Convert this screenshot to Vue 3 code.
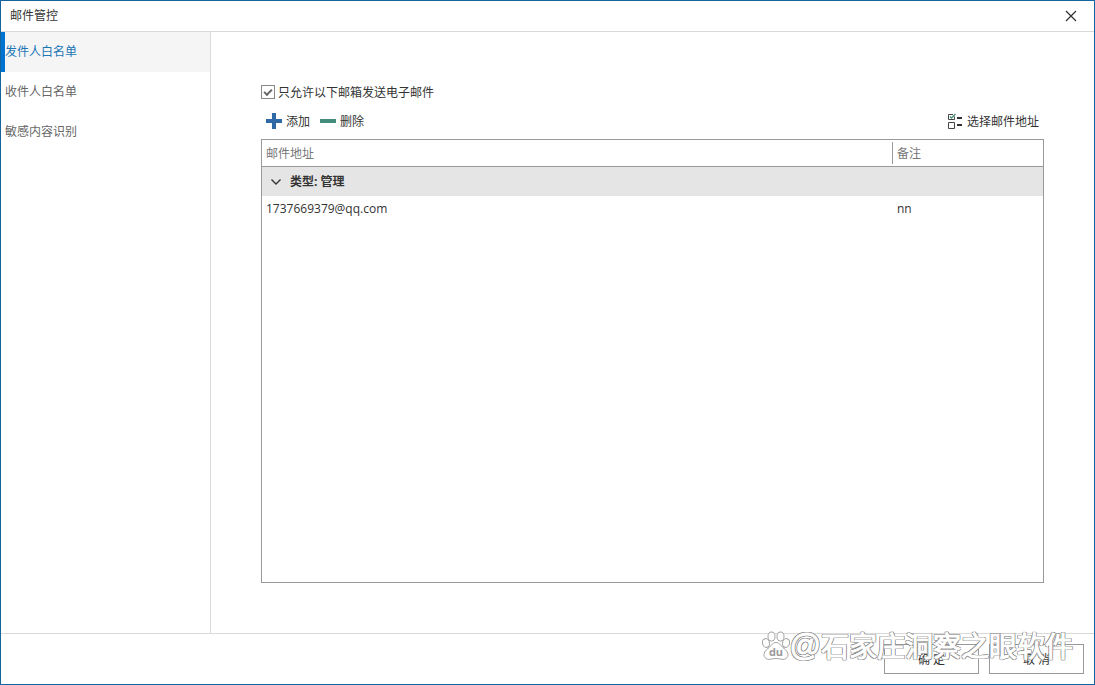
<script setup>
import { ref } from 'vue'

const sections = ['发件人白名单', '收件人白名单', '敏感内容识别']
const active = ref(0)
const onlyListed = ref(true)
const expanded = ref(true)
const rows = [{ address: '1737669379@qq.com', note: 'nn' }]
</script>

<template>
  <div class="window">
    <header class="titlebar">
      <h1>邮件管控</h1>
      <button class="close" type="button" aria-label="关闭">
        <svg width="12" height="12" viewBox="0 0 12 12"><path d="M1 1L11 11M11 1L1 11" fill="none" stroke="#333" stroke-width="1.3" /></svg>
      </button>
    </header>

    <div class="body">
      <nav class="sidebar">
        <button
          v-for="(name, i) in sections"
          :key="name"
          type="button"
          :class="['section', { active: i === active }]"
          @click="active = i"
        >{{ name }}</button>
      </nav>

      <main class="content">
        <label class="check">
          <input v-model="onlyListed" type="checkbox" />
          <span>只允许以下邮箱发送电子邮件</span>
        </label>

        <div class="toolbar">
          <button type="button" class="tool">
            <svg width="16" height="16" viewBox="0 0 16 16"><path d="M6 0h4v6h6v4h-6v6H6v-6H0V6h6z" fill="#2f6aa6" /></svg>
            <span>添加</span>
          </button>
          <button type="button" class="tool">
            <svg width="16" height="16" viewBox="0 0 16 16"><path d="M0 6h16v4H0z" fill="#438c7b" /></svg>
            <span>删除</span>
          </button>
          <button type="button" class="tool pick">
            <svg width="16" height="16" viewBox="0 0 16 16">
              <path d="M7.500 3.500V6.500H1.500V1.500H6M1.500 9.500H7.500V15.500H1.500Z" fill="none" stroke="#444" />
              <path d="M3 3.500L4.500 5L8.500 1" fill="none" stroke="#438c7b" stroke-width="1.3" />
              <path d="M10 4h5v2h-5zM10 11h5v2h-5z" fill="#333" />
            </svg>
            <span>选择邮件地址</span>
          </button>
        </div>

        <div class="grid">
          <table>
            <colgroup><col /><col class="note-col" /></colgroup>
            <thead>
              <tr><th scope="col">邮件地址</th><th scope="col" class="note">备注</th></tr>
            </thead>
            <tbody>
              <tr class="group">
                <td colspan="2">
                  <button type="button" :aria-expanded="expanded" @click="expanded = !expanded">
                    <svg width="12" height="8" viewBox="0 0 12 8"><path d="M1.500 1.500L6 6L10.500 1.500" fill="none" stroke="#333" stroke-width="1.4" /></svg>
                    <span>类型: 管理</span>
                  </button>
                </td>
              </tr>
              <template v-if="expanded">
                <tr v-for="row in rows" :key="row.address">
                  <td>{{ row.address }}</td><td class="value">{{ row.note }}</td>
                </tr>
              </template>
            </tbody>
          </table>
        </div>
      </main>
    </div>

    <footer class="footer">
      <button type="button" class="action">确 定</button>
      <button type="button" class="action">取 消</button>
      <div class="watermark">
        <svg width="28" height="30" viewBox="0 0 28 30">
          <g fill="#fff" stroke="#a2a2a2" stroke-width="1">
            <ellipse cx="9.500" cy="5.500" rx="3.500" ry="4.500" />
            <ellipse cx="18.500" cy="5.500" rx="3.500" ry="4.500" />
            <ellipse cx="4" cy="12" rx="3.500" ry="4.500" transform="rotate(-15 4 12)" />
            <ellipse cx="24" cy="12" rx="3.500" ry="4.500" transform="rotate(15 24 12)" />
            <path d="M14 11.500C10 11.500 9 15.500 6 17.500C2 20.500 1 24 3 26.500C6 30 10 27.500 14 27.500S22 30 25 26.500C27 24 26 20.500 22 17.500C19 15.500 18 11.500 14 11.500Z" />
          </g>
          <text x="14" y="25" text-anchor="middle" class="du">du</text>
        </svg>
        <span class="at">@</span>
        <span>石家庄洞察之眼软件</span>
      </div>
    </footer>
  </div>
</template>

<style>
body {
  margin: 0;
}
</style>

<style scoped>
.window {
  box-sizing: border-box;
  min-height: 100vh;
  display: flex;
  flex-direction: column;
  border: 1px solid #1464a0;
  background: #fff;
  color: #333;
  font: 12px/16px "Open Sans", "Noto Sans CJK SC", sans-serif;
}

button {
  margin: 0;
  padding: 0;
  border: 0;
  background: none;
  color: inherit;
  font: inherit;
}

svg {
  display: block;
  flex: none;
}

.titlebar {
  display: flex;
  align-items: center;
  justify-content: space-between;
  height: 30px;
  padding: 0 17px 0 9px;
  border-bottom: 1px solid #d9d9d9;
}

h1 {
  margin: 0;
  font: inherit;
}

.body {
  flex: 1;
  display: flex;
}

.sidebar {
  box-sizing: border-box;
  width: 210px;
  flex: none;
  border-right: 1px solid #d9d9d9;
}

.section {
  display: block;
  box-sizing: border-box;
  width: 100%;
  height: 40px;
  border-left: 4px solid transparent;
  color: #666;
  text-align: left;
}

.section.active {
  border-left-color: #0072cf;
  background: #f5f5f5;
  color: #1a75b5;
}

.content {
  flex: 1;
  display: flex;
  flex-direction: column;
  padding: 52px 50px 50px;
}

.check {
  display: flex;
  align-items: flex-start;
  gap: 3px;
  align-self: flex-start;
  line-height: 18px;
}

.check input {
  appearance: none;
  box-sizing: border-box;
  display: grid;
  place-items: center;
  width: 14px;
  height: 14px;
  margin: 1px 0 0;
  border: 1px solid #888;
}

.check input:checked::before {
  content: "";
  box-sizing: border-box;
  width: 8px;
  height: 5px;
  border: solid #666;
  border-width: 0 0 2px 2px;
  transform: translateY(-1px) rotate(-45deg);
}

.toolbar {
  display: flex;
  gap: 10px;
  padding: 11px 5px 8px;
}

.tool {
  display: flex;
  align-items: flex-start;
  gap: 4px;
  line-height: 18px;
}

.pick {
  margin-left: auto;
}

.grid {
  flex: 1;
  border: 1px solid #999;
}

table {
  width: 100%;
  border-collapse: collapse;
  table-layout: fixed;
}

.note-col {
  width: 151px;
}

th,
td {
  height: 26px;
  padding: 0 4px;
  text-align: left;
}

th {
  height: 24px;
  padding-top: 2px;
  border-bottom: 1px solid #999;
  color: #777;
  font-weight: 400;
}

.note {
  padding-left: 5px;
  background: linear-gradient(#999, #999) 0 2px / 1px 22px no-repeat;
}

.value {
  padding-left: 5px;
}

.group td {
  height: 29px;
  padding: 0 8px;
  background: #e5e5e5;
}

.group button {
  display: flex;
  align-items: center;
  gap: 8px;
  font-weight: 700;
}

.footer {
  position: relative;
  display: flex;
  justify-content: flex-end;
  gap: 10px;
  padding: 10px;
  border-top: 1px solid #d9d9d9;
}

.action {
  width: 95px;
  height: 30px;
  padding-top: 2px;
  border: 1px solid #999;
}

.watermark {
  position: absolute;
  right: 21px;
  top: -4px;
  display: flex;
  align-items: center;
  color: #fff;
  font-size: 28px;
  line-height: 32px;
  white-space: nowrap;
  pointer-events: none;
  -webkit-text-stroke: 1px #fff;
  text-shadow:
    1px 0 #888, -1px 0 #888, 0 1px #888, 0 -1px #888,
    1px 1px #888, -1px 1px #888, 1px -1px #888, -1px -1px #888;
}

.at {
  font-family: "Liberation Sans", sans-serif;
  font-size: 31px;
}

.du {
  fill: #999;
  font: 700 11px "Open Sans", sans-serif;
  -webkit-text-stroke: 0;
  text-shadow: none;
}
</style>
